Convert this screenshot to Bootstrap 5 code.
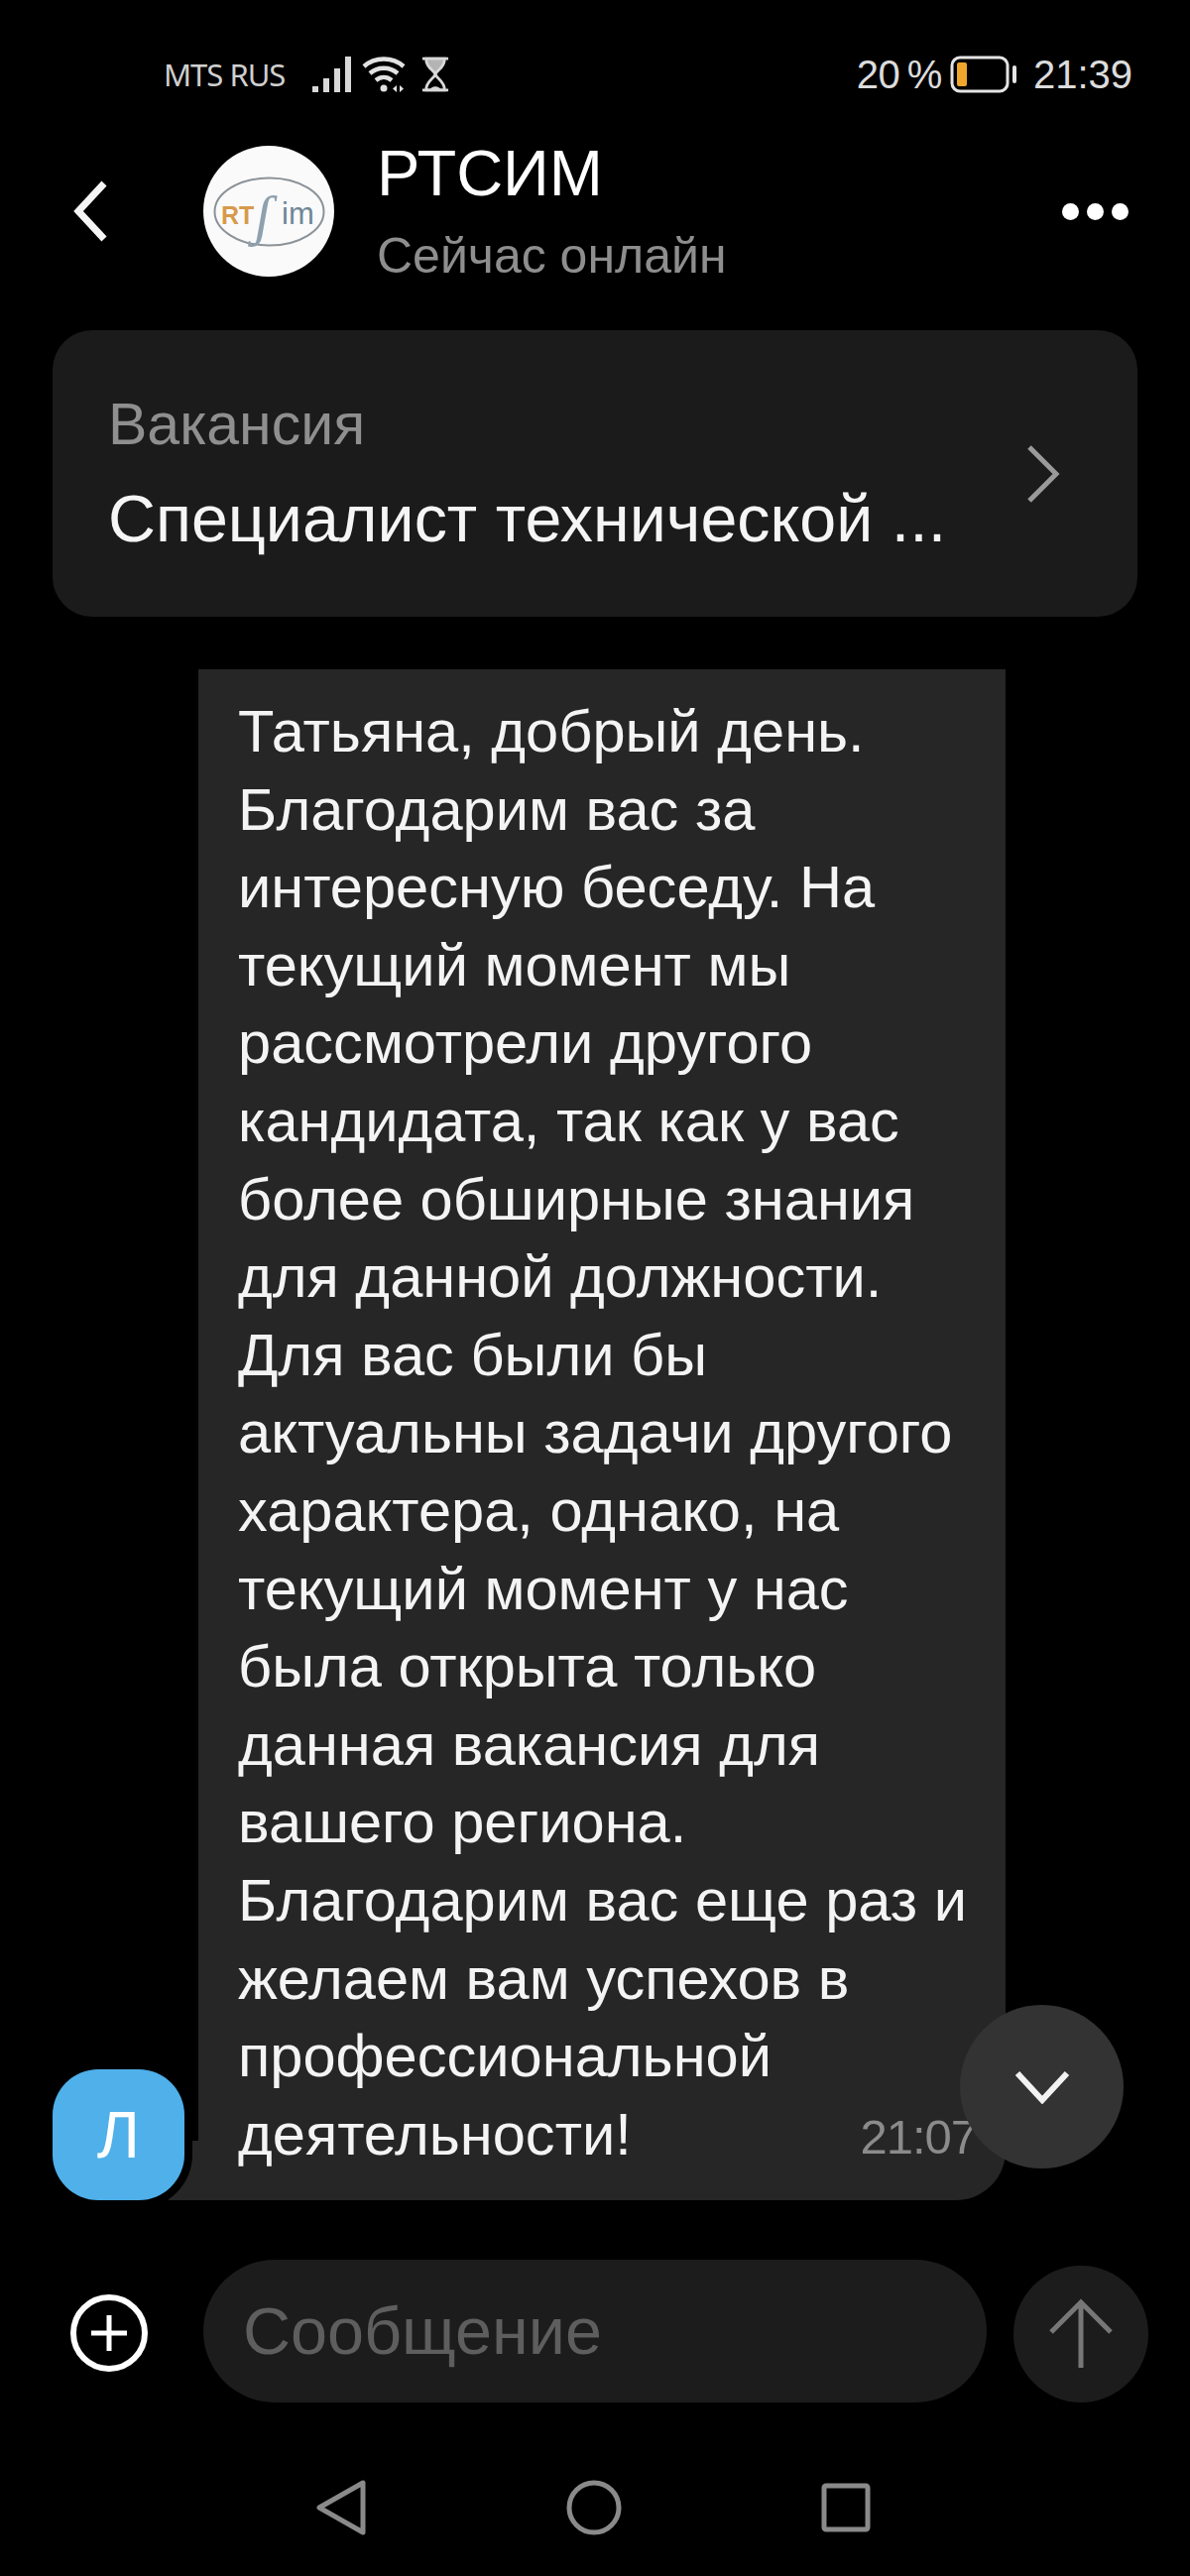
<!DOCTYPE html>
<html lang="ru">
<head>
    <meta charset="utf-8">
    <title>РТСИМ</title>
    <link href="https://cdn.jsdelivr.net/npm/bootstrap@5.3.3/dist/css/bootstrap.min.css" rel="stylesheet">
    <script src="https://cdn.jsdelivr.net/npm/bootstrap@5.3.3/dist/js/bootstrap.bundle.min.js"></script>
    <style>
        body { background: #000; color: #f5f5f5; font-family: "Liberation Sans", Arial, sans-serif; }
        .phone { width: 1200px; height: 2598px; overflow: hidden; }

        .status-row { height: 146px; padding: 50px 58px 0 165px; color: #cfcfcf; align-items: flex-start; }
        .carrier { font-size: 31px; line-height: 50px; width: 150px; font-family: "Noto Sans", sans-serif; letter-spacing: -1px; }
        .status-icons { gap: 10px; height: 50px; }
        .charge { font-size: 40px; line-height: 50px; color: #dcdcdc; }
        .charge-pct { word-spacing: -3px; letter-spacing: -.5px; }
        .menu-dot { width: 17px; height: 17px; }

        .head-row { height: 134px; padding-left: 74px; padding-right: 62px; }
        .back-btn { width: 131px; }
        .logo-circle { width: 132px; height: 132px; background: #fafafa; }
        .head-text { margin-left: 43px; margin-top: 6px; }
        .head-title { font-size: 65px; line-height: 70px; margin-top: -8px; color: #fff; }
        .head-sub { font-size: 50px; line-height: 52px; margin-top: 22px; color: #8e8e8e; }

        .vacancy-box { margin: 53px 53px 0; height: 289px; padding: 0 78px 0 56px; background: #1b1b1b; border-radius: 40px; }
        .vacancy-label { font-size: 59px; line-height: 60px; color: #8f8f8f; }
        .vacancy-name { font-size: 66.4px; line-height: 70px; margin-top: 30px; color: #f5f5f5; }

        .msg-row { margin: 53px 0 0 53px; height: 1544px; position: relative; }
        .sender { width: 133px; height: 132px; background: #4fb0ea; border-radius: 46px; color: #fff; font-size: 66px; position: relative; z-index: 2; box-shadow: 0 0 0 8px #000; }
        .bubble { margin-left: 14px; width: 814px; height: 100%; background: #262626; border-radius: 0 0 50px 0; padding: 24px 0 0 40px; position: relative; }
        .bubble-tail { position: absolute; left: -30px; bottom: 0; width: 50px; height: 60px; background: #262626; }
        .bubble-text { font-size: 59.6px; line-height: 78.6px; color: #f4f4f4; white-space: nowrap; }
        .msg-time { position: absolute; right: 29px; bottom: 36px; font-size: 49px; line-height: 56px; color: #8b8b8b; letter-spacing: -1px; }
        .down-btn { position: absolute; left: 915px; top: 1347px; width: 165px; height: 165px; background: #333; z-index: 3; }

        .input-row { margin-top: 60px; height: 144px; padding-left: 70px; padding-right: 42px; }
        .plus-btn { width: 80px; padding-top: 3px; }
        .msg-input { margin-left: 55px; width: 790px; height: 144px; padding: 2px 0 0 40px; background: #1c1c1c; border-radius: 72px; font-size: 66.5px; color: #5e5e5e; }
        .send-btn { margin-left: 27px; width: 136px; height: 138px; margin-top: 6px; background: #1c1c1c; }

        .nav-row { margin-top: 78px; padding-left: 318px; }
        .nav-gap { gap: 201px; }
    </style>
</head>
<body>
<div class="phone">

    <div class="status-row d-flex">
        <div class="carrier">MTS RUS</div>
        <div class="status-icons d-flex align-items-center">
            <svg width="40" height="38" viewBox="0 0 40 38" fill="#d8d8d8">
                <rect x="0" y="31" width="6" height="6"/><rect x="11" y="23" width="6" height="14"/><rect x="22" y="13" width="6" height="24"/><rect x="33" y="1" width="6" height="36"/>
            </svg>
            <svg width="46" height="38" viewBox="0 0 46 38" fill="none" stroke="#e2e2e2" stroke-width="4.5">
                <path d="M2 11C13 1 31 1 42 11"/><path d="M8 18C16 11 28 11 36 18"/><path d="M14 25C19 21 25 21 30 25"/>
                <circle cx="22" cy="33" r="3.5" fill="#e2e2e2" stroke="none"/>
                <path d="M35 30v7l-4-3.5zM38 30v7l4-3.5z" fill="#e2e2e2" stroke="none"/>
            </svg>
            <svg class="ms-1" width="28" height="38" viewBox="0 0 30 38" fill="none" stroke="#d8d8d8" stroke-width="3">
                <path d="M1 2H29M1 36H29"/><path d="M5 2C5 12 13 14 15 19C17 14 25 12 25 2z" fill="#b4b4b4"/><path d="M15 19C13 24 5 26 5 36H25C25 26 17 24 15 19z"/>
                <path d="M9 36C10 31 20 31 21 36z" fill="#d8d8d8" stroke="none"/>
            </svg>
        </div>
        <div class="ms-auto d-flex align-items-center">
            <span class="charge charge-pct">20 %</span>
            <svg class="ms-2" width="68" height="38" viewBox="0 0 68 38" fill="none">
                <rect x="2" y="2" width="56" height="34" rx="8" stroke="#e4e4e4" stroke-width="3"/>
                <rect x="7" y="7" width="10" height="24" rx="2" fill="#eea62c"/>
                <rect x="63" y="10" width="4" height="18" rx="2" fill="#e4e4e4"/>
            </svg>
            <span class="charge ms-3">21:39</span>
        </div>
    </div>

    <div class="head-row d-flex align-items-center">
        <div class="back-btn">
            <svg class="d-block" width="36" height="62" viewBox="0 0 36 62" fill="none" stroke="#f5f5f5" stroke-width="7">
                <path d="M31 3L5 31L31 59"/>
            </svg>
        </div>
        <div class="logo-circle rounded-circle flex-shrink-0">
            <svg class="d-block" width="132" height="132" viewBox="0 0 132 132">
                <ellipse cx="66.5" cy="66.5" rx="55" ry="34" fill="none" stroke="#8b9298" stroke-width="2"/>
                <text x="18" y="79" font-family="Liberation Sans" font-weight="700" font-size="25" fill="#d79a4c">RT</text>
                <text x="52" y="90" font-family="Liberation Serif" font-style="italic" font-size="58" fill="#8fa1ae">ʃ</text>
                <text x="79" y="79" font-family="Liberation Sans" font-size="31" fill="#6f8797">im</text>
            </svg>
        </div>
        <div class="head-text">
            <div class="head-title">РТСИМ</div>
            <div class="head-sub">Сейчас онлайн</div>
        </div>
        <div class="ms-auto d-flex gap-2">
            <span class="bg-white rounded-circle d-block menu-dot"></span>
            <span class="bg-white rounded-circle d-block menu-dot"></span>
            <span class="bg-white rounded-circle d-block menu-dot"></span>
        </div>
    </div>

    <div class="vacancy-box d-flex align-items-center justify-content-between">
        <div>
            <div class="vacancy-label">Вакансия</div>
            <div class="vacancy-name">Специалист технической ...</div>
        </div>
        <svg width="34" height="58" viewBox="0 0 34 58" fill="none" stroke="#9a9a9a" stroke-width="5">
            <path d="M3 2L30 29L3 56"/>
        </svg>
    </div>

    <div class="msg-row d-flex align-items-end">
        <div class="sender d-flex align-items-center justify-content-center flex-shrink-0">Л</div>
        <div class="bubble">
            <div class="bubble-tail"></div>
            <div class="bubble-text">Татьяна, добрый день.<br>Благодарим вас за<br>интересную беседу. На<br>текущий момент мы<br>рассмотрели другого<br>кандидата, так как у вас<br>более обширные знания<br>для данной должности.<br>Для вас были бы<br>актуальны задачи другого<br>характера, однако, на<br>текущий момент у нас<br>была открыта только<br>данная вакансия для<br>вашего региона.<br>Благодарим вас еще раз и<br>желаем вам успехов в<br>профессиональной<br>деятельности!</div>
            <div class="msg-time">21:07</div>
        </div>
        <div class="down-btn rounded-circle d-flex align-items-center justify-content-center">
            <svg width="56" height="34" viewBox="0 0 56 34" fill="none" stroke="#f2f2f2" stroke-width="6">
                <path d="M3 3L28 30L53 3"/>
            </svg>
        </div>
    </div>

    <div class="input-row d-flex align-items-center">
        <div class="plus-btn">
            <svg class="d-block" width="80" height="80" viewBox="0 0 80 80" fill="none" stroke="#fff">
                <circle cx="40" cy="40" r="36" stroke-width="6"/>
                <path d="M40 22V58M22 40H58" stroke-width="5"/>
            </svg>
        </div>
        <div class="msg-input d-flex align-items-center">Сообщение</div>
        <div class="send-btn rounded-circle d-flex align-items-center justify-content-center">
            <svg width="66" height="72" viewBox="0 0 66 72" fill="none" stroke="#777" stroke-width="5">
                <path d="M33 70V4M3 34L33 4L63 34"/>
            </svg>
        </div>
    </div>

    <div class="nav-row d-flex align-items-center nav-gap">
        <svg width="52" height="56" viewBox="0 0 52 56" fill="none" stroke="#8a8a8a" stroke-width="5" stroke-linejoin="round">
            <path d="M48 3V53L4 28z"/>
        </svg>
        <svg width="56" height="56" viewBox="0 0 56 56" fill="none" stroke="#8a8a8a" stroke-width="5">
            <circle cx="28" cy="28" r="25"/>
        </svg>
        <svg width="50" height="50" viewBox="0 0 50 50" fill="none" stroke="#8a8a8a" stroke-width="5">
            <rect x="3" y="3" width="44" height="44" rx="2"/>
        </svg>
    </div>

</div>
</body>
</html>
